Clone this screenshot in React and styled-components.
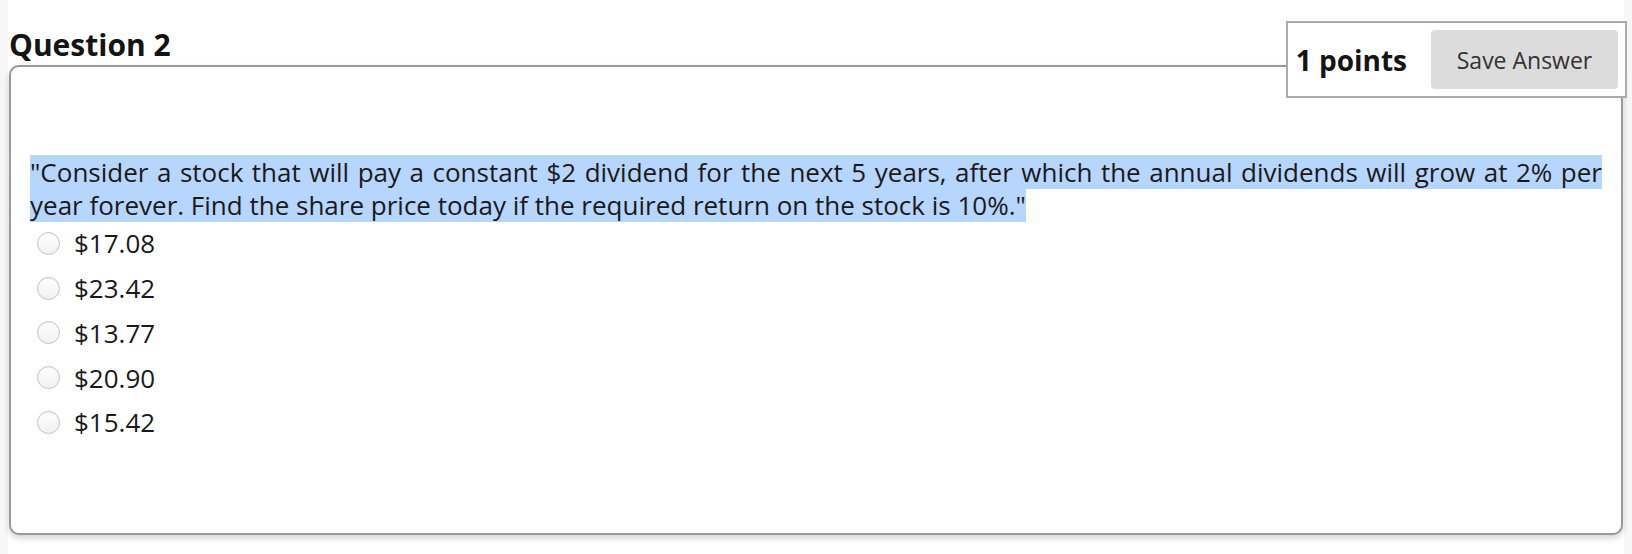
import React from "react";
import styled, { createGlobalStyle } from "styled-components";

const GlobalStyle = createGlobalStyle`
  html, body {
    margin: 0;
    padding: 0;
    background: #f7f7f7;
    font-family: "Open Sans", "Noto Sans", sans-serif;
    color: #1a1a1a;
  }
`;

const Page = styled.div`
  margin: 0 8px;
  height: 554px;
  background: #ffffff;
`;

const QuestionBlock = styled.div`
  position: relative;
  padding-top: 27px;
`;

const Heading = styled.h2`
  margin: 0 0 2px 1px;
  font-size: 30px;
  line-height: 36px;
  font-weight: 700;
  color: #141414;
`;

const PointsBox = styled.div`
  position: absolute;
  top: 21px;
  right: -3px;
  display: flex;
  align-items: center;
  gap: 24px;
  padding: 7px 7px 7px 8px;
  background: #ffffff;
  border: 2px solid #ababab;
`;

const Points = styled.span`
  font-size: 28px;
  font-weight: 700;
  color: #141414;
`;

const SaveButton = styled.button`
  width: 187px;
  height: 59px;
  border: none;
  border-radius: 4px;
  background: #dcdcdc;
  color: #333333;
  font-family: "Open Sans", sans-serif;
  font-size: 23px;
  cursor: pointer;
`;

const Panel = styled.div`
  margin: 0 1px;
  height: 470px;
  box-sizing: border-box;
  padding: 89px 19px 0 19px;
  border: 2px solid #999999;
  border-radius: 10px;
  background: #ffffff;
  box-shadow: 0 3px 6px rgba(0, 0, 0, 0.18);
`;

const Prompt = styled.p`
  margin: 0;
  font-size: 26px;
  line-height: 33px;
  text-align: justify;
`;

const Selected = styled.span`
  background: linear-gradient(
    transparent 1px,
    #b6d6fd 1px,
    #b6d6fd calc(100% - 1px),
    transparent calc(100% - 1px)
  );
`;

const Options = styled.ul`
  list-style: none;
  margin: -1px 0 0 0;
  padding: 0;
`;

const Option = styled.li`
  display: flex;
  align-items: center;
  height: 44.75px;
  padding-left: 7px;
  font-size: 26px;
`;

const Radio = styled.span`
  width: 21px;
  height: 21px;
  flex: none;
  margin-right: 14px;
  border-radius: 50%;
  border: 1px solid #c4c4c4;
  background: linear-gradient(#ffffff, #f1f1f1);
  box-shadow: inset 0 1px 1px rgba(0, 0, 0, 0.05);
`;

const answers = ["$17.08", "$23.42", "$13.77", "$20.90", "$15.42"];

export default function App() {
  return (
    <>
      <GlobalStyle />
      <Page>
        <QuestionBlock>
          <Heading>Question 2</Heading>
          <PointsBox>
            <Points>1 points</Points>
            <SaveButton>Save Answer</SaveButton>
          </PointsBox>
          <Panel>
            <Prompt>
              <Selected>
                "Consider a stock that will pay a constant $2 dividend for the next 5 years, after
                which the annual dividends will grow at 2% per year forever. Find the share price
                today if the required return on the stock is 10%."
              </Selected>
            </Prompt>
            <Options>
              {answers.map((a) => (
                <Option key={a}>
                  <Radio />
                  {a}
                </Option>
              ))}
            </Options>
          </Panel>
        </QuestionBlock>
      </Page>
    </>
  );
}
